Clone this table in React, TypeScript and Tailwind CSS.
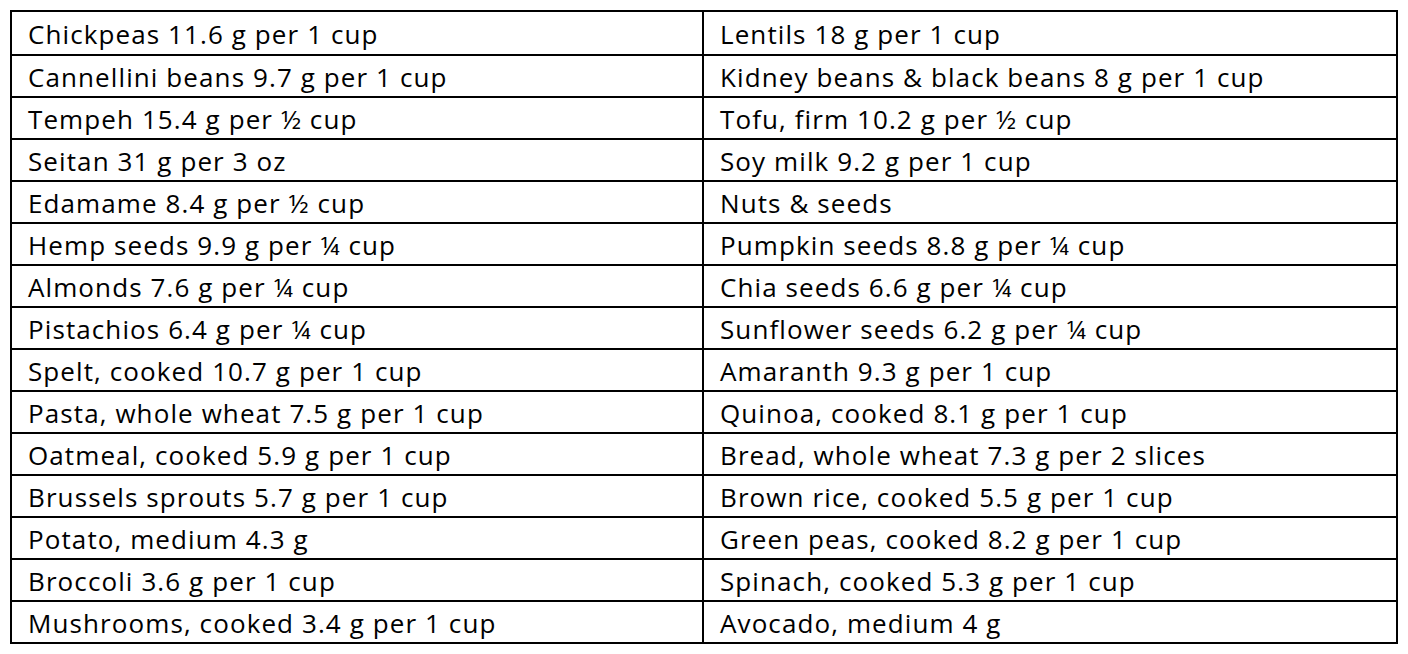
const rows: [string, string][] = [
  ["Chickpeas 11.6 g per 1 cup", "Lentils 18 g per 1 cup"],
  ["Cannellini beans 9.7 g per 1 cup", "Kidney beans & black beans 8 g per 1 cup"],
  ["Tempeh 15.4 g per ½ cup", "Tofu, firm 10.2 g per ½ cup"],
  ["Seitan 31 g per 3 oz", "Soy milk 9.2 g per 1 cup"],
  ["Edamame 8.4 g per ½ cup", "Nuts & seeds"],
  ["Hemp seeds 9.9 g per ¼ cup", "Pumpkin seeds 8.8 g per ¼ cup"],
  ["Almonds 7.6 g per ¼ cup", "Chia seeds 6.6 g per ¼ cup"],
  ["Pistachios 6.4 g per ¼ cup", "Sunflower seeds 6.2 g per ¼ cup"],
  ["Spelt, cooked 10.7 g per 1 cup", "Amaranth 9.3 g per 1 cup"],
  ["Pasta, whole wheat 7.5 g per 1 cup", "Quinoa, cooked 8.1 g per 1 cup"],
  ["Oatmeal, cooked 5.9 g per 1 cup", "Bread, whole wheat 7.3 g per 2 slices"],
  ["Brussels sprouts 5.7 g per 1 cup", "Brown rice, cooked 5.5 g per 1 cup"],
  ["Potato, medium 4.3 g", "Green peas, cooked 8.2 g per 1 cup"],
  ["Broccoli 3.6 g per 1 cup", "Spinach, cooked 5.3 g per 1 cup"],
  ["Mushrooms, cooked 3.4 g per 1 cup", "Avocado, medium 4 g"],
]

export default function App() {
  return (
    <div className="min-h-[654px] w-[1408px] bg-white pl-[10px] pt-[10px] font-['Open_Sans',sans-serif] text-black">
      <div className="w-[1388px] border-2 border-black">
        {rows.map(([a, b], idx) => (
          <div
            key={a}
            className={`grid h-[42px] grid-cols-2 ${idx > 0 ? "border-t-2 border-black" : ""}`}
          >
            <div className="flex items-center border-r-2 border-black pl-[16px] pt-[1px] text-[26px] leading-none tracking-[1.1px]">
              {a}
            </div>
            <div className="flex items-center pl-[16px] pt-[1px] text-[26px] leading-none tracking-[1.1px]">
              {b}
            </div>
          </div>
        ))}
      </div>
    </div>
  )
}
